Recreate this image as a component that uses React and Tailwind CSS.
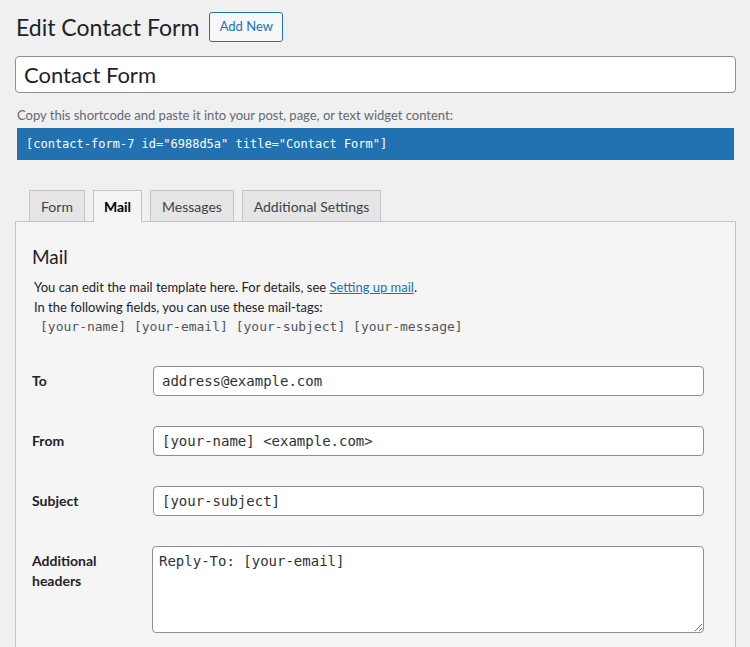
import React from "react";

const sans = "font-['Lato',sans-serif]";
const mono = "font-['DejaVu_Sans_Mono',monospace]";

const tabs = [
  { label: "Form", w: "w-[56px]" },
  { label: "Mail", w: "w-[49px]", active: true },
  { label: "Messages", w: "w-[84px]" },
  { label: "Additional Settings", w: "w-[139px]" },
];

const fields = [
  { label: "To", value: "address@example.com" },
  { label: "From", value: "[your-name] <example.com>" },
  { label: "Subject", value: "[your-subject]" },
];

const App = () => {
  return (
    <div className={`min-h-screen bg-[#f0f0f1] pl-[15px] pr-[14px] pt-[12px] text-[#1d2327] ${sans}`}>
      {/* heading */}
      <div className="flex items-center h-[30px]">
        <h1 className="text-[23px] font-normal leading-[30px] ml-[1px] text-[#1d2327]">
          Edit Contact Form
        </h1>
        <button className="ml-[10px] h-[30px] w-[74px] rounded-[3px] border border-[#2271b1] bg-[#f6f7f7] text-[13px] text-[#2271b1]">
          Add New
        </button>
      </div>

      {/* title */}
      <div className="mt-[14px] h-[37px] rounded-[4px] border border-[#8c8f94] bg-white flex items-center px-[8px] text-[22px] leading-none">
        Contact Form
      </div>

      {/* shortcode */}
      <p className="mt-[13px] ml-[2px] text-[13px] leading-[18px] text-[#646970]">
        Copy this shortcode and paste it into your post, page, or text widget content:
      </p>
      <div className={`mt-[4px] mx-[2px] h-[32px] bg-[#2271b1] flex items-center pl-[9px] text-[12px] text-white ${mono}`}>
        [contact-form-7 id="6988d5a" title="Contact Form"]
      </div>

      {/* tabs */}
      <div className="mt-[30px] flex items-end gap-[8px] pl-[14px] relative z-10">
        {tabs.map((t) => (
          <div
            key={t.label}
            className={`${t.w} flex items-center justify-center text-[14px] border border-[#c3c4c7] ${
              t.active
                ? "h-[32px] -mb-[1px] border-b-0 bg-[#f5f5f5] font-bold text-black"
                : "h-[31px] bg-[#e5e5e5] text-[#3c434a] border-b-0"
            }`}
          >
            {t.label}
          </div>
        ))}
      </div>

      {/* panel */}
      <div className="border border-[#c3c4c7] bg-[#f5f5f5] px-[16px] pt-[22px] pb-[40px]">
        <h2 className="text-[19px] font-normal leading-[26px] text-[#1d2327]">Mail</h2>
        <div className="mt-[7px] ml-[2px] text-[13px] leading-[20px] text-[#1d2327]">
          <p>
            You can edit the mail template here. For details, see{" "}
            <a href="#" className="text-[#2271b1] underline">
              Setting up mail
            </a>
            .
          </p>
          <p>In the following fields, you can use these mail-tags:</p>
          <p className={`pl-[6px] text-[13px] text-[#50575e] ${mono}`}>
            [your-name] [your-email] [your-subject] [your-message]
          </p>
        </div>

        <div className="mt-[29px] flex flex-col gap-[30px]">
          {fields.map((f) => (
            <div key={f.label} className="flex items-start">
              <div className="w-[121px] pt-[5px] text-[14px] leading-[20px] font-bold text-[#1d2327]">
                {f.label}
              </div>
              <div
                className={`w-[551px] h-[30px] rounded-[4px] border border-[#8c8f94] bg-white flex items-center pl-[8px] text-[14px] text-[#2c3338] ${mono}`}
              >
                {f.value}
              </div>
            </div>
          ))}
          <div className="flex items-start">
            <div className="w-[120px] pt-[5px] text-[14px] leading-[20px] font-bold text-[#1d2327]">
              Additional
              <br />
              headers
            </div>
            <textarea
              readOnly
              defaultValue="Reply-To: [your-email]"
              className={`w-[552px] h-[87px] rounded-[4px] border border-[#8c8f94] bg-white px-[6px] py-[4px] text-[14px] leading-[20px] text-[#2c3338] outline-none ${mono}`}
            />
          </div>
        </div>
      </div>
    </div>
  );
};

export default App;
